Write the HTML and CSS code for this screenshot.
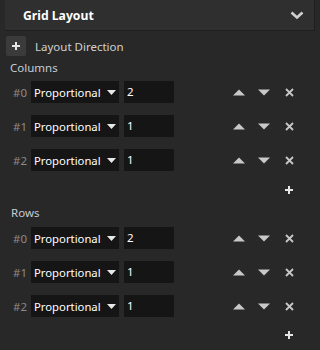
FILE: index.html
```html
<!DOCTYPE html>
<html>
<head>
<meta charset="utf-8">
<link rel="stylesheet" href="styles.css">
</head>
<body>
<div class="panel">
  <div class="header">
    <span class="title">Grid Layout</span>
    <svg class="chev" width="14" height="8" viewBox="0 0 14 8"><path d="M1.5 1.5 L7 6.5 L12.5 1.5" fill="none" stroke="#cfcfcf" stroke-width="2.6"/></svg>
  </div>
  <div class="dir">
    <span class="addbtn"><svg width="10" height="10" viewBox="0 0 10 10"><path d="M5 1V9M1 5H9" stroke="#e6e6e6" stroke-width="2"/></svg></span>
    <span class="dirlabel">Layout Direction</span>
  </div>

  <div class="section">Columns</div>
  <div class="list">
    <div class="row"><span class="idx">#0</span><div class="select">Proportional<svg class="tri" width="9" height="5" viewBox="0 0 9 5"><path d="M0 0H9L4.5 5Z" fill="#e8e8e8"/></svg></div><div class="num">2</div>
      <div class="acts"><svg class="ic" width="12" height="7" viewBox="0 0 12 7"><path d="M0 6.5L6 0.5L12 6.5Z" fill="#c8c8c8"/></svg><svg class="ic" width="12" height="7" viewBox="0 0 12 7"><path d="M0 0.5L6 6.5L12 0.5Z" fill="#c8c8c8"/></svg><svg class="ic" width="9" height="9" viewBox="0 0 9 9"><path d="M1 1L8 8M8 1L1 8" stroke="#c8c8c8" stroke-width="1.8"/></svg></div></div>
    <div class="row"><span class="idx">#1</span><div class="select">Proportional<svg class="tri" width="9" height="5" viewBox="0 0 9 5"><path d="M0 0H9L4.5 5Z" fill="#e8e8e8"/></svg></div><div class="num">1</div>
      <div class="acts"><svg class="ic" width="12" height="7" viewBox="0 0 12 7"><path d="M0 6.5L6 0.5L12 6.5Z" fill="#c8c8c8"/></svg><svg class="ic" width="12" height="7" viewBox="0 0 12 7"><path d="M0 0.5L6 6.5L12 0.5Z" fill="#c8c8c8"/></svg><svg class="ic" width="9" height="9" viewBox="0 0 9 9"><path d="M1 1L8 8M8 1L1 8" stroke="#c8c8c8" stroke-width="1.8"/></svg></div></div>
    <div class="row"><span class="idx">#2</span><div class="select">Proportional<svg class="tri" width="9" height="5" viewBox="0 0 9 5"><path d="M0 0H9L4.5 5Z" fill="#e8e8e8"/></svg></div><div class="num">1</div>
      <div class="acts"><svg class="ic" width="12" height="7" viewBox="0 0 12 7"><path d="M0 6.5L6 0.5L12 6.5Z" fill="#c8c8c8"/></svg><svg class="ic" width="12" height="7" viewBox="0 0 12 7"><path d="M0 0.5L6 6.5L12 0.5Z" fill="#c8c8c8"/></svg><svg class="ic" width="9" height="9" viewBox="0 0 9 9"><path d="M1 1L8 8M8 1L1 8" stroke="#c8c8c8" stroke-width="1.8"/></svg></div></div>
    <div class="addrow"><svg width="10" height="10" viewBox="0 0 10 10"><path d="M5 1V9M1 5H9" stroke="#e6e6e6" stroke-width="2"/></svg></div>
  </div>

  <div class="section rows">Rows</div>
  <div class="list">
    <div class="row"><span class="idx">#0</span><div class="select">Proportional<svg class="tri" width="9" height="5" viewBox="0 0 9 5"><path d="M0 0H9L4.5 5Z" fill="#e8e8e8"/></svg></div><div class="num">2</div>
      <div class="acts"><svg class="ic" width="12" height="7" viewBox="0 0 12 7"><path d="M0 6.5L6 0.5L12 6.5Z" fill="#c8c8c8"/></svg><svg class="ic" width="12" height="7" viewBox="0 0 12 7"><path d="M0 0.5L6 6.5L12 0.5Z" fill="#c8c8c8"/></svg><svg class="ic" width="9" height="9" viewBox="0 0 9 9"><path d="M1 1L8 8M8 1L1 8" stroke="#c8c8c8" stroke-width="1.8"/></svg></div></div>
    <div class="row"><span class="idx">#1</span><div class="select">Proportional<svg class="tri" width="9" height="5" viewBox="0 0 9 5"><path d="M0 0H9L4.5 5Z" fill="#e8e8e8"/></svg></div><div class="num">1</div>
      <div class="acts"><svg class="ic" width="12" height="7" viewBox="0 0 12 7"><path d="M0 6.5L6 0.5L12 6.5Z" fill="#c8c8c8"/></svg><svg class="ic" width="12" height="7" viewBox="0 0 12 7"><path d="M0 0.5L6 6.5L12 0.5Z" fill="#c8c8c8"/></svg><svg class="ic" width="9" height="9" viewBox="0 0 9 9"><path d="M1 1L8 8M8 1L1 8" stroke="#c8c8c8" stroke-width="1.8"/></svg></div></div>
    <div class="row"><span class="idx">#2</span><div class="select">Proportional<svg class="tri" width="9" height="5" viewBox="0 0 9 5"><path d="M0 0H9L4.5 5Z" fill="#e8e8e8"/></svg></div><div class="num">1</div>
      <div class="acts"><svg class="ic" width="12" height="7" viewBox="0 0 12 7"><path d="M0 6.5L6 0.5L12 6.5Z" fill="#c8c8c8"/></svg><svg class="ic" width="12" height="7" viewBox="0 0 12 7"><path d="M0 0.5L6 6.5L12 0.5Z" fill="#c8c8c8"/></svg><svg class="ic" width="9" height="9" viewBox="0 0 9 9"><path d="M1 1L8 8M8 1L1 8" stroke="#c8c8c8" stroke-width="1.8"/></svg></div></div>
    <div class="addrow"><svg width="10" height="10" viewBox="0 0 10 10"><path d="M5 1V9M1 5H9" stroke="#e6e6e6" stroke-width="2"/></svg></div>
  </div>
</div>
</body>
</html>
```
FILE: styles.css
```css
html, body {
  margin: 0;
  padding: 0;
  background: #282828;
  width: 320px;
  height: 350px;
  overflow: hidden;
  font-family: "Noto Sans", "Open Sans", sans-serif;
  font-size: 11.3px;
}
.panel {
  display: flex;
  flex-direction: column;
}
.header {
  margin-left: 5px;
  height: 30px;
  background: #2f2f2f;
  border-bottom: 1px solid #1f1f1f;
  border-right: 1px solid #1f1f1f;
  display: flex;
  align-items: center;
  justify-content: space-between;
  padding-left: 18px;
  padding-right: 10px;
  box-sizing: content-box;
  width: 281px;
}
.title {
  color: #ffffff;
  font-weight: bold;
  font-size: 12.2px;
}
.chev { display: block; }
.dir {
  display: flex;
  align-items: center;
  margin-top: 5px;
  margin-left: 6px;
  height: 20px;
}
.addbtn {
  width: 20px;
  height: 20px;
  background: #3b3b3b;
  border-radius: 2px;
  display: flex;
  align-items: center;
  justify-content: center;
}
.dirlabel {
  color: #d0d0d0;
  margin-left: 9px;
  font-size: 11.5px;
}
.section {
  color: #c6ccd4;
  margin-left: 10px;
  margin-top: 4px;
  height: 15px;
  line-height: 15px;
  font-size: 11.5px;
}
.section.rows {
  margin-top: 0;
  height: 18px;
  line-height: 20px;
  margin-left: 11px;
}
.list {
  display: flex;
  flex-direction: column;
}
.row {
  height: 34px;
  display: flex;
  align-items: center;
}
.idx {
  width: 18px;
  margin-left: 13px;
  color: #8a8a8a;
  font-size: 11.5px;
}
.select {
  width: 88px;
  height: 22px;
  background: #151515;
  color: #ffffff;
  display: flex;
  align-items: center;
  justify-content: space-between;
  padding: 0 3px 0 3px;
  box-sizing: border-box;
  font-size: 11.3px;
}
.tri { display: block; margin-right: 0; }
.num {
  margin-left: 5px;
  width: 50px;
  height: 22px;
  background: #151515;
  color: #ffffff;
  box-sizing: border-box;
  padding-left: 3px;
  line-height: 22px;
  font-size: 11.5px;
}
.acts {
  margin-left: 59px;
  display: flex;
  align-items: center;
}
.acts .ic { display: block; }
.acts .ic:nth-child(2) { margin-left: 13px; }
.acts .ic:nth-child(3) { margin-left: 15px; }
.addrow {
  height: 26px;
  display: flex;
  align-items: center;
  padding-left: 284px;
}
.addrow svg { display: block; }
.list:last-child .addrow { height: 24px; }
```
